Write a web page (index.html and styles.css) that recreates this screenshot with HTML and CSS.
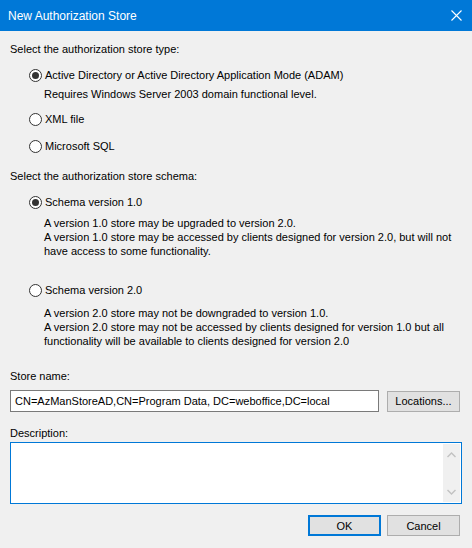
FILE: index.html
```html
<!DOCTYPE html>
<html lang="en">
<head>
  <meta charset="UTF-8">
  <meta name="viewport" content="width=device-width, initial-scale=1.0">
  <link rel="stylesheet" href="styles.css">
  <title>New Authorization Store</title>
</head>
<body>
  <div class="dialog">
    <div class="titlebar">
      <span class="title">New Authorization Store</span>
      <svg class="close" width="11" height="11" viewBox="0 0 11 11">
        <path d="M0.5 0.5 L10.5 10.5 M10.5 0.5 L0.5 10.5" stroke="#fff" stroke-width="1.1" fill="none"/>
      </svg>
    </div>

    <div class="content">
      <div class="heading first">Select the authorization store type:</div>

      <div class="radio checked r-ad"><span class="dot"></span>Active Directory or Active Directory Application Mode (ADAM)</div>
      <div class="note n-ad">Requires Windows Server 2003 domain functional level.</div>
      <div class="radio r-xml"><span class="dot"></span>XML file</div>
      <div class="radio r-sql"><span class="dot"></span>Microsoft SQL</div>

      <div class="heading h-schema">Select the authorization store schema:</div>

      <div class="radio checked r-v1"><span class="dot"></span>Schema version 1.0</div>
      <div class="note n-v1">
        A version 1.0 store may be upgraded to version 2.0.<br>
        A version 1.0 store may be accessed by clients designed for version 2.0, but will not<br>
        have access to some functionality.
      </div>
      <div class="radio r-v2"><span class="dot"></span>Schema version 2.0</div>
      <div class="note n-v2">
        A version 2.0 store may not be downgraded to version 1.0.<br>
        A version 2.0 store may not be accessed by clients designed for version 1.0 but all<br>
        functionality will be available to clients designed for version 2.0
      </div>

      <div class="heading h-name">Store name:</div>
      <div class="name-row">
        <div class="textbox">CN=AzManStoreAD,CN=Program Data, DC=weboffice,DC=local</div>
        <button class="btn">Locations...</button>
      </div>

      <div class="heading h-desc">Description:</div>
      <div class="memo">
        <div class="scrollbar">
          <svg width="9" height="6" viewBox="0 0 9 6"><path d="M0.5 5 L4.5 1 L8.5 5" stroke="#c2c2c2" stroke-width="1.4" fill="none"/></svg>
          <svg width="9" height="6" viewBox="0 0 9 6"><path d="M0.5 1 L4.5 5 L8.5 1" stroke="#c2c2c2" stroke-width="1.4" fill="none"/></svg>
        </div>
      </div>

      <div class="actions">
        <button class="btn default">OK</button>
        <button class="btn">Cancel</button>
      </div>
    </div>
  </div>
</body>
</html>
```

FILE: styles.css
```css
body {
  margin: 0;
  font-family: 'Liberation Sans', Arial, sans-serif;
  font-size: 11px;
  color: #000;
  background-color: #f0f0f0;
}

.dialog {
  width: 472px;
  height: 548px;
  background-color: #f0f0f0;
  overflow: hidden;
}

.titlebar {
  height: 31px;
  background-color: #0078d7;
  color: #fff;
  display: flex;
  align-items: center;
  justify-content: space-between;
  padding: 0 10px 0 8px;
}

.title {
  font-size: 12px;
  line-height: 14px;
  margin-top: 1px;
}

.close {
  display: block;
}

.content {
  padding: 0 10px;
}

.heading,
.radio,
.note {
  line-height: 14px;
}

.heading.first { margin-top: 11px; }
.h-schema { margin-top: 16px; }
.h-name { margin-top: 21px; }
.h-desc { margin-top: 14px; }

.radio {
  display: flex;
  align-items: center;
  padding-left: 19px;
}

.r-ad { margin-top: 12px; }
.r-xml { margin-top: 11px; }
.r-sql { margin-top: 13px; }
.r-v1 { margin-top: 12px; }
.r-v2 { margin-top: 25px; }

.dot {
  width: 11px;
  height: 11px;
  border: 1px solid #333;
  border-radius: 50%;
  background-color: #fff;
  margin-right: 3px;
  position: relative;
  flex: none;
}

.radio.checked .dot::after {
  content: '';
  position: absolute;
  left: 2px;
  top: 2px;
  width: 7px;
  height: 7px;
  border-radius: 50%;
  background-color: #333;
}

.note {
  padding-left: 34px;
  white-space: nowrap;
}

.n-ad { margin-top: 5px; }
.n-v1 { margin-top: 7px; }
.n-v2 { margin-top: 9px; }

.name-row {
  display: flex;
  align-items: center;
  gap: 8px;
  margin-top: 7px;
}

.textbox {
  width: 363px;
  height: 20px;
  line-height: 20px;
  border: 1px solid #7a7a7a;
  background-color: #fff;
  padding-left: 4px;
  white-space: nowrap;
  overflow: hidden;
}

.btn {
  font-family: 'Liberation Sans', Arial, sans-serif;
  font-size: 11px;
  color: #000;
  width: 73px;
  height: 21px;
  padding: 0;
  background-color: #e1e1e1;
  border: 1px solid #adadad;
  border-radius: 0;
}

.btn.default {
  border: 2px solid #0078d7;
}

.memo {
  margin-top: 2px;
  height: 60px;
  width: 450px;
  border: 1px solid #0078d7;
  background-color: #fff;
  display: flex;
  justify-content: flex-end;
}

.scrollbar {
  width: 17px;
  margin: 1px 1px 1px 0;
  background-color: #f0f0f0;
  display: flex;
  flex-direction: column;
  justify-content: space-between;
  align-items: center;
  padding: 8px 0 7px;
}

.scrollbar svg {
  display: block;
}

.actions {
  display: flex;
  justify-content: flex-end;
  gap: 6px;
  margin-top: 11px;
  padding-right: 2px;
}
```
